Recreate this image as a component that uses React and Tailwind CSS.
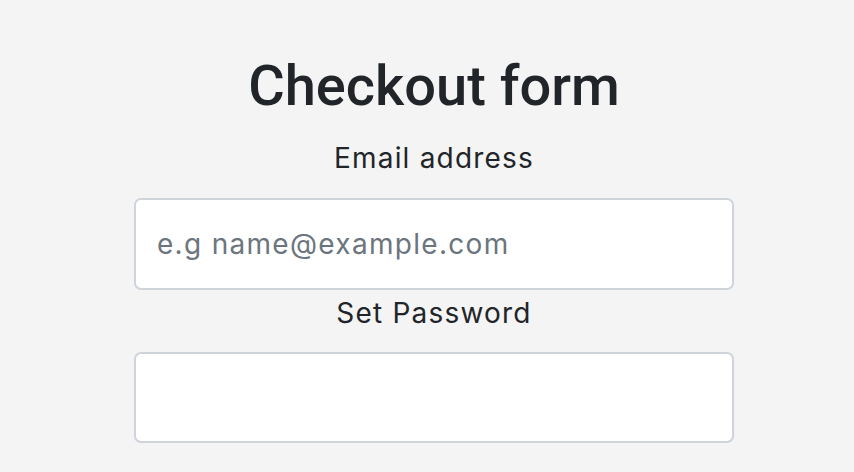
import React from 'react'

export default function App() {
  return (
    <div
      className="min-h-screen bg-[#f4f4f4] flex justify-center pl-[14px] text-[#212529]"
      style={{ fontFamily: 'Inter, "Liberation Sans", Arial, sans-serif' }}
    >
      <form className="w-[600px] text-center">
        <h2
          className="mt-[53px] mb-[17px] text-[56px] leading-[1.2] font-medium"
          style={{ fontFamily: 'Roboto, "Liberation Sans", Arial, sans-serif' }}
        >
          Checkout form
        </h2>
        <label htmlFor="email" className="block text-[28px] leading-[1.5] tracking-[1.2px] mb-[19px]">
          Email address
        </label>
        <input
          id="email"
          type="email"
          placeholder="e.g name@example.com"
          className="block w-full h-[92px] px-[21px] bg-white border-2 border-[#ced4da] rounded-[7px] text-[28px] tracking-[1.3px] text-[#495057] placeholder:text-[#6c757d] outline-none"
        />
        <label htmlFor="password" className="block mt-[2px] mb-[18px] text-[28px] leading-[1.5] tracking-[1.2px]">
          Set Password
        </label>
        <input
          id="password"
          type="password"
          className="block w-full h-[91px] px-[21px] bg-white border-2 border-[#ced4da] rounded-[7px] text-[28px] outline-none"
        />
      </form>
    </div>
  )
}
